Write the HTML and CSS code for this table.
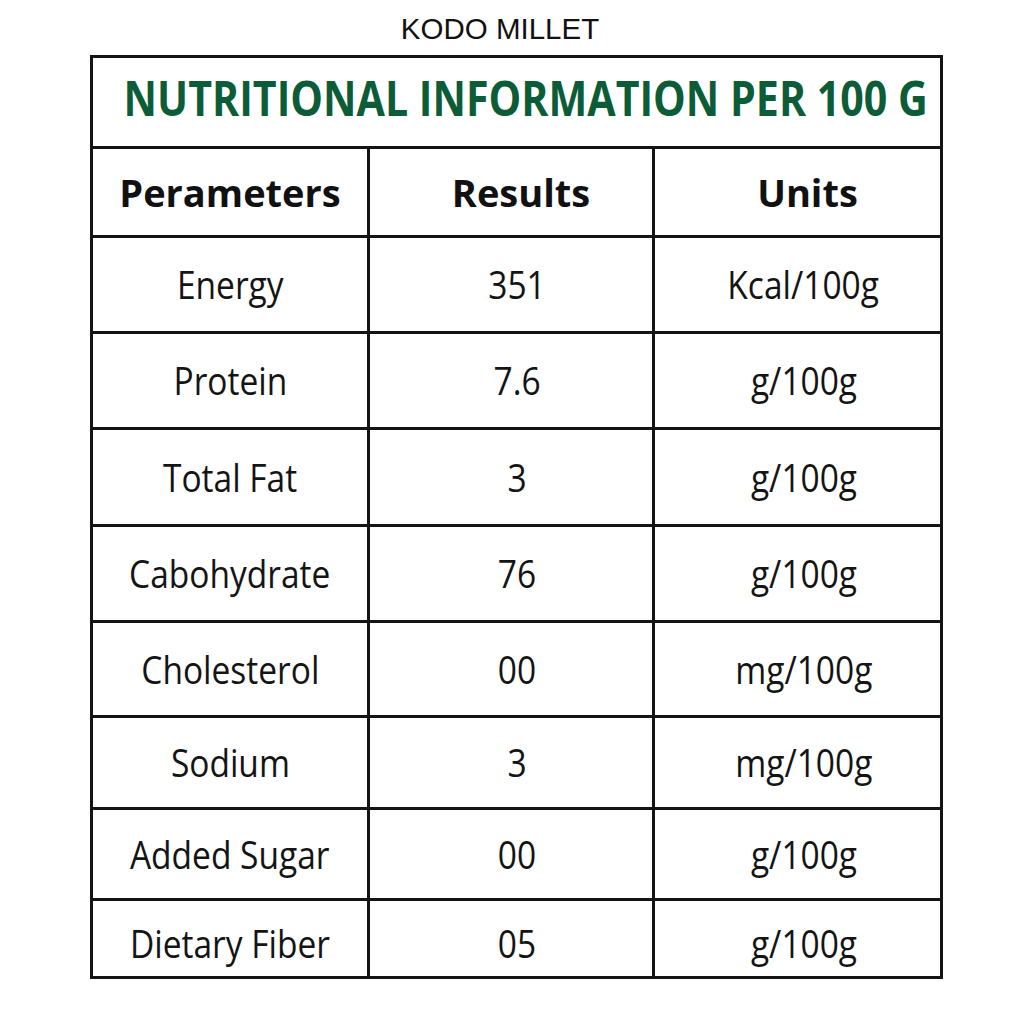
FILE: index.html
```html
<!DOCTYPE html>
<html lang="en">
<head>
<meta charset="utf-8">
<title>Kodo Millet – Nutritional Information</title>
<link rel="stylesheet" href="styles.css">
</head>
<body>
<h1 class="caption">KODO MILLET</h1>
<div class="sheet">
  <div class="cell banner"><span class="t">NUTRITIONAL INFORMATION PER 100 G</span></div>

  <div class="cell head"><span class="t">Perameters</span></div>
  <div class="cell head mid"><span class="t">Results</span></div>
  <div class="cell head mid"><span class="t">Units</span></div>

  <div class="cell"><span class="t">Energy</span></div>
  <div class="cell mid"><span class="t">351</span></div>
  <div class="cell mid"><span class="t">Kcal/100g</span></div>

  <div class="cell"><span class="t">Protein</span></div>
  <div class="cell mid"><span class="t">7.6</span></div>
  <div class="cell mid"><span class="t">g/100g</span></div>

  <div class="cell"><span class="t">Total Fat</span></div>
  <div class="cell mid"><span class="t">3</span></div>
  <div class="cell mid"><span class="t">g/100g</span></div>

  <div class="cell"><span class="t">Cabohydrate</span></div>
  <div class="cell mid"><span class="t">76</span></div>
  <div class="cell mid"><span class="t">g/100g</span></div>

  <div class="cell"><span class="t">Cholesterol</span></div>
  <div class="cell mid"><span class="t">00</span></div>
  <div class="cell mid"><span class="t">mg/100g</span></div>

  <div class="cell"><span class="t">Sodium</span></div>
  <div class="cell mid"><span class="t">3</span></div>
  <div class="cell mid"><span class="t">mg/100g</span></div>

  <div class="cell"><span class="t">Added Sugar</span></div>
  <div class="cell mid"><span class="t">00</span></div>
  <div class="cell mid"><span class="t">g/100g</span></div>

  <div class="cell last"><span class="t">Dietary Fiber</span></div>
  <div class="cell mid last"><span class="t">05</span></div>
  <div class="cell mid last"><span class="t">g/100g</span></div>
</div>
</body>
</html>
```
FILE: styles.css
```css
html, body {
  margin: 0;
  padding: 0;
  background: #ffffff;
}

body {
  width: 1024px;
  font-family: "Open Sans", "Liberation Sans", sans-serif;
  color: #111111;
}

.caption {
  box-sizing: border-box;
  height: 55px;
  margin: 0;
  padding: 14px 24px 0 0;
  font-family: "Liberation Sans", Arial, sans-serif;
  font-weight: 400;
  font-size: 29.5px;
  line-height: 29.5px;
  text-align: center;
  color: #111111;
}

.sheet {
  width: 853px;
  box-sizing: border-box;
  margin-left: 90px;
  padding: 3px;
  background: #141414;
  display: grid;
  grid-template-columns: 274px 282px 285px;
  grid-template-rows: 88px 86px 93px 93px 94px 93px 92px 89px 88px 75px;
  gap: 3px;
}

.cell {
  background: #ffffff;
  display: flex;
  align-items: center;
  justify-content: center;
  font-size: 38.5px;
  font-weight: 400;
  line-height: 1;
  color: #141414;
  white-space: nowrap;
}

.t {
  display: inline-block;
  transform: scaleX(0.87);
}

.mid {
  padding-left: 12px;
}

.banner {
  grid-column: 1 / -1;
  padding: 0 0 9px 18px;
  font-size: 49px;
  font-weight: 700;
  color: #0c5c37;
}

.banner .t {
  transform: scaleX(0.84);
}

.head {
  font-size: 38px;
  font-weight: 700;
  color: #111111;
}

.head .t {
  transform: none;
}

.head.mid {
  padding-left: 20px;
}

.last {
  padding-top: 10px;
}
```
